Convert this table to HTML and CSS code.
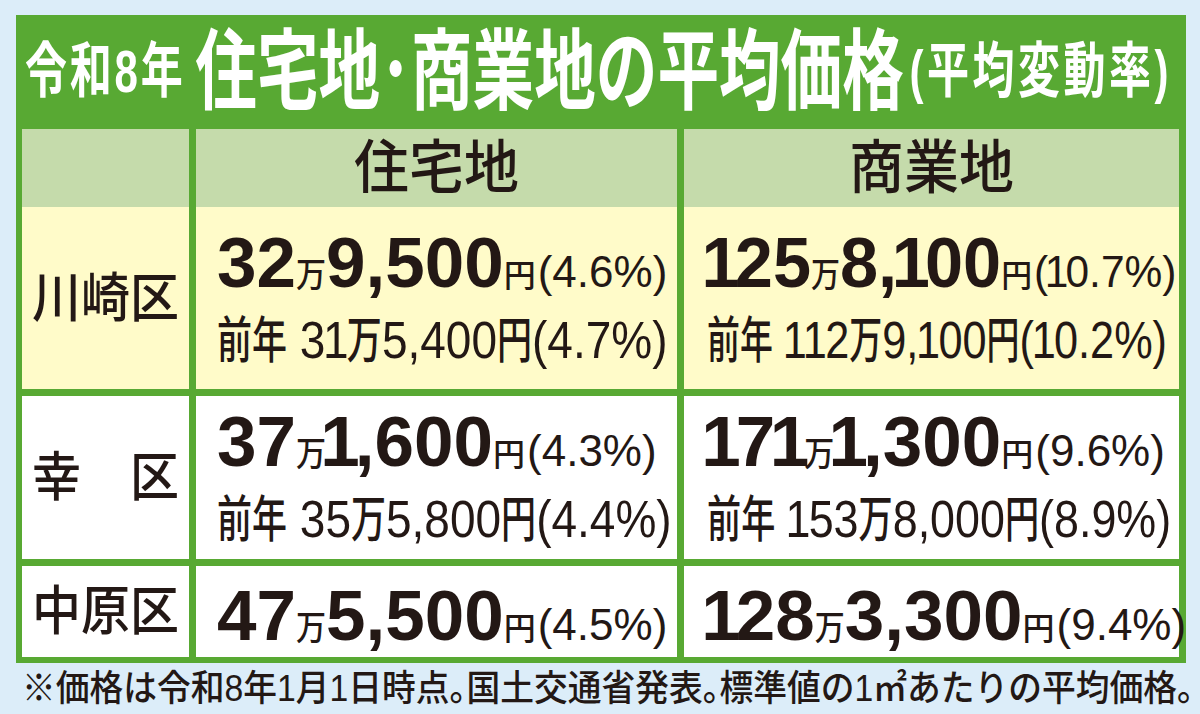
FILE: index.html
```html
<!DOCTYPE html>
<html lang="ja">
<head>
<meta charset="utf-8">
<title>令和8年 住宅地・商業地の平均価格</title>
<link rel="stylesheet" href="styles.css">
</head>
<body>
<div class="page">
  <div class="box">
    <div class="title">
      <span class="tline"><span class="t-sm">令和8年</span><span class="t-lg">住宅地<span class="dot">･</span>商業地の平均価格</span><span class="t-sm t-par">(平均変動率)</span></span>
    </div>
    <div class="grid">
      <div class="hd"></div>
      <div class="hd"><span>住宅地</span></div>
      <div class="hd"><span>商業地</span></div>

      <div class="lab yel"><span>川崎区</span></div>
      <div class="cell yel">
        <div class="l1"><b>32</b><span class="u">万</span><b>9,500</b><span class="yen">円</span><span class="p">(4.6%)</span></div>
        <div class="l2"><span class="k">前年</span> <span class="d">3<span class="o">1</span></span><span class="k">万</span><span class="d">5,400</span><span class="k">円</span><span class="d">(4.7%)</span></div>
      </div>
      <div class="cell c3 yel">
        <div class="l1 fit-a"><b><span class="o">1</span>25</b><span class="u">万</span><b>8,<span class="o">1</span>00</b><span class="yen">円</span><span class="p">(<span class="o">1</span>0.7%)</span></div>
        <div class="l2 fit-b"><span class="k">前年</span> <span class="d"><span class="o">1</span><span class="o">1</span>2</span><span class="k">万</span><span class="d">9,<span class="o">1</span>00</span><span class="k">円</span><span class="d">(<span class="o">1</span>0.2%)</span></div>
      </div>

      <div class="lab wht gap"><span>幸　区</span></div>
      <div class="cell wht gap">
        <div class="l1"><b>37</b><span class="u">万</span><b><span class="o">1</span>,600</b><span class="yen">円</span><span class="p">(4.3%)</span></div>
        <div class="l2"><span class="k">前年</span> <span class="d">35</span><span class="k">万</span><span class="d">5,800</span><span class="k">円</span><span class="d">(4.4%)</span></div>
      </div>
      <div class="cell c3 wht gap">
        <div class="l1"><b><span class="o">1</span>7<span class="o">1</span></b><span class="u">万</span><b><span class="o">1</span>,300</b><span class="yen">円</span><span class="p">(9.6%)</span></div>
        <div class="l2 fit-c"><span class="k">前年</span> <span class="d"><span class="o">1</span>53</span><span class="k">万</span><span class="d">8,000</span><span class="k">円</span><span class="d">(8.9%)</span></div>
      </div>

      <div class="lab wht gap"><span>中原区</span></div>
      <div class="cell wht gap">
        <div class="l1"><b>47</b><span class="u">万</span><b>5,500</b><span class="yen">円</span><span class="p">(4.5%)</span></div>
      </div>
      <div class="cell c3 wht gap">
        <div class="l1"><b><span class="o">1</span>28</b><span class="u">万</span><b>3,300</b><span class="yen">円</span><span class="p">(9.4%)</span></div>
      </div>
    </div>
  </div>
  <p class="note"><span>※価格は令和8年1月1日時点。国土交通省発表。標準値の1㎡あたりの平均価格。</span></p>
</div>
</body>
</html>
```

FILE: styles.css
```css
* {
  box-sizing: border-box;
  margin: 0;
  padding: 0;
}

html, body {
  width: 1200px;
  height: 714px;
  overflow: hidden;
}

body {
  background: #dcedf9;
  font-family: "Liberation Sans", "Noto Sans CJK JP", sans-serif;
  color: #231815;
}

.page {
  padding: 15px 14px 0 16px;
}

.box {
  width: 1170px;
  background: #58a933;
}

/* ---------- title ---------- */
.title {
  height: 114px;
  display: flex;
  align-items: center;
  padding-left: 9px;
  color: #fff;
}

.tline {
  display: inline-flex;
  align-items: center;
  white-space: nowrap;
  font-weight: 700;
  line-height: 1;
  transform: scaleX(0.7);
  transform-origin: 0 50%;
}

.t-sm {
  font-size: 60px;
  letter-spacing: 4px;
}

.t-lg {
  font-size: 88px;
  margin: 0 8px 0 14px;
}

.t-par {
  letter-spacing: 5px;
}

/* ---------- table ---------- */
.grid {
  display: grid;
  grid-template-columns: 167px 481px 495px;
  grid-template-rows: 78px 182px 170px 98px;
  column-gap: 7px;
  padding: 0 7px 6px 6px;
}

.hd {
  background: #c5dbab;
  display: flex;
  align-items: center;
  justify-content: center;
  font-size: 55px;
  font-weight: 500;
  line-height: 1;
}

.hd span {
  display: inline-block;
  transform: scaleY(1.05);
}

.lab {
  display: flex;
  align-items: center;
  justify-content: center;
  font-size: 49px;
  font-weight: 500;
  line-height: 1;
}

.lab span {
  display: inline-block;
  transform: scaleY(1.1);
}

.yel {
  background: #fffbc9;
}

.wht {
  background: #ffffff;
}

.gap {
  margin-top: 7px;
}

.cell {
  display: flex;
  flex-direction: column;
  justify-content: center;
  padding: 8px 0 0 21px;
  white-space: nowrap;
}

.c3 {
  padding-left: 23px;
}

.l1 {
  height: 71px;
  font-size: 71px;
  line-height: 71px;
  font-weight: 700;
  transform-origin: 0 50%;
}

.l1 b {
  font-weight: 700;
}

.l1 .u {
  display: inline-block;
  font-size: 30px;
  line-height: 1;
  font-weight: 500;
  transform: scaleY(1.12);
  transform-origin: 0 0.8465em;
}

.l1 .yen {
  font-size: 32px;
  line-height: 1;
  font-weight: 500;
}

.l1 .p {
  font-size: 44px;
  line-height: 1;
  font-weight: 400;
  margin-left: 2px;
}

.l1 .o {
  margin: 0 -0.07em 0 -0.08em;
}

.l2 {
  height: 71px;
  margin-top: 9px;
  font-size: 46px;
  line-height: 71px;
  font-weight: 400;
  transform-origin: 0 50%;
}

.l2 .d,
.l2 .k {
  display: inline-block;
  line-height: 1;
  transform-origin: 0 0.8465em;
}

.l2 .d {
  font-size: 46px;
  transform: scaleY(1.14);
}

.l2 .k {
  font-size: 35px;
  font-weight: 500;
  transform: scaleY(1.42);
}

.l2 .o {
  margin: 0 -0.04em 0 -0.05em;
}

/* lines condensed to fit their cell */
.fit-a {
  transform: scaleX(0.965);
}

.fit-b {
  transform: scaleX(0.94);
}

.fit-c {
  transform: scaleX(0.975);
}

/* ---------- note ---------- */
.note {
  height: 51px;
  display: flex;
  align-items: center;
  padding-left: 6px;
}

.note span {
  display: inline-block;
  font-size: 33.75px;
  line-height: 1;
  font-weight: 500;
  white-space: nowrap;
  font-feature-settings: "halt";
  transform: scaleY(1.08);
}
```
